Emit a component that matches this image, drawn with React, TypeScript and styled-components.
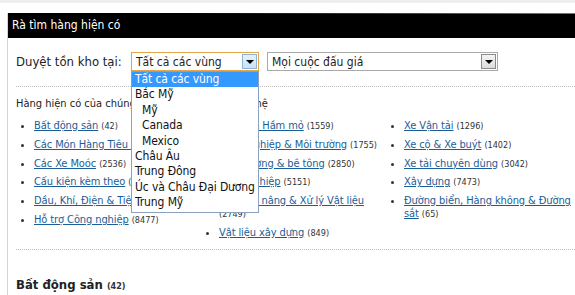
import React from 'react';
import styled, { createGlobalStyle } from 'styled-components';

const Global = createGlobalStyle`
  body {
    margin: 0;
    background: #fff;
    font-family: "DejaVu Sans Condensed", "Liberation Sans", sans-serif;
    color: #222;
  }
`;

const TopStrip = styled.div`
  height: 10px;
  border-top: 3px solid #eeeeee;
`;

const Panel = styled.div`
  margin-left: 7px;
  border-left: 1px solid #d4d4d4;
  min-height: 300px;
`;

const Header = styled.div`
  height: 24px;
  background: #000;
  border-top: 1px solid;
  border-image: linear-gradient(to right, #000 30%, #b06a20) 1;
  color: #fff;
  font-size: 12px;
  line-height: 23px;
  padding-left: 4px;
`;

const Body = styled.div`
  padding: 14px 0 0 8px;
`;

const FilterRow = styled.div`
  display: flex;
  align-items: center;
  height: 19px;
`;

const Label = styled.span`
  font-size: 13px;
  width: 115px;
`;

const SelectWrap = styled.div`
  position: relative;
  margin-right: 8px;
`;

const Select = styled.div<{ $w: number; $focus?: boolean }>`
  box-sizing: border-box;
  width: ${(p) => p.$w}px;
  height: 19px;
  border: 1px solid ${(p) => (p.$focus ? '#e3a64a' : '#a9a9a9')};
  display: flex;
  align-items: center;
  justify-content: space-between;
  padding-left: 4px;
  font-size: 12px;
  background: #fff;
`;

const Arrow = styled.div<{ $focus?: boolean }>`
  width: 15px;
  height: 15px;
  margin-right: 1px;
  box-sizing: border-box;
  border: 1px solid ${(p) => (p.$focus ? '#8fb3d6' : '#8a8a8a')};
  background: ${(p) =>
    p.$focus ? 'linear-gradient(#e6f2fc, #c9e1f6)' : 'linear-gradient(#f4f4f4, #dcdcdc)'};
  display: flex;
  align-items: center;
  justify-content: center;
`;

const Tri = styled.div`
  width: 0;
  height: 0;
  border-left: 4px solid transparent;
  border-right: 4px solid transparent;
  border-top: 4px solid #000;
  margin-top: 1px;
`;

const Dropdown = styled.ul`
  position: absolute;
  top: 19px;
  left: 0;
  width: 128px;
  box-sizing: border-box;
  margin: 0;
  padding: 0 0 1px;
  list-style: none;
  background: #fff;
  border: 1px solid #8aa2bd;
  z-index: 10;
`;

const Option = styled.li<{ $indent?: boolean; $active?: boolean }>`
  font-size: 12px;
  height: 15.4px;
  line-height: 15.4px;
  padding-left: ${(p) => (p.$indent ? '10px' : '3px')};
  background: ${(p) => (p.$active ? '#3399ff' : 'transparent')};
  color: ${(p) => (p.$active ? '#fff' : '#111')};
  letter-spacing: -0.1px;
`;

const Divider = styled.div<{ $gap: number }>`
  border-top: 1px dotted #bdbdbd;
  margin-top: ${(p) => p.$gap}px;
`;

const Intro = styled.div`
  font-size: 11px;
  margin: 10px 0 9px;
`;

const Grid = styled.div`
  display: grid;
  grid-template-columns: 185px 185px 1fr;
`;

const List = styled.ul`
  margin: 0;
  padding-left: 18px;
  list-style: disc;
  color: #333;
`;

const Item = styled.li`
  font-size: 11px;
  line-height: 13px;
  margin-bottom: 5.8px;
  padding-right: 2px;
  letter-spacing: -0.1px;
`;

const Link = styled.a`
  color: #1b5d98;
  text-decoration: underline;
`;

const Count = styled.span`
  font-size: 9px;
  line-height: 1;
  color: #333;
  letter-spacing: 0;
`;

const SectionTitle = styled.h3`
  font-size: 13px;
  font-weight: bold;
  margin: 27px 0 0;
`;

const regions = [
  { t: 'Tất cả các vùng', active: true },
  { t: 'Bắc Mỹ' },
  { t: 'Mỹ', indent: true },
  { t: 'Canada', indent: true },
  { t: 'Mexico', indent: true },
  { t: 'Châu Âu' },
  { t: 'Trung Đông' },
  { t: 'Úc và Châu Đại Dương' },
  { t: 'Trung Mỹ' },
];

const columns: [string, string][][] = [
  [
    ['Bất động sản', '42'],
    ['Các Món Hàng Tiêu Dùng', '1178'],
    ['Các Xe Moóc', '2536'],
    ['Cấu kiện kèm theo', '9870'],
    ['Dầu, Khí, Điện & Tiện ích', '1433'],
    ['Hỗ trợ Công nghiệp', '8477'],
  ],
  [
    ['Mỏ đá & Hầm mỏ', '1559'],
    ['Nông nghiệp & Môi trường', '1755'],
    ['Làm đường & bê tông', '2850'],
    ['Công nghiệp', '5151'],
    ['Cần cẩu nâng & Xử lý Vật liệu', '2749'],
    ['Vật liệu xây dựng', '849'],
  ],
  [
    ['Xe Vận tải', '1296'],
    ['Xe cộ & Xe buýt', '1402'],
    ['Xe tải chuyên dùng', '3042'],
    ['Xây dựng', '7473'],
    ['Đường biển, Hàng không & Đường sắt', '65'],
  ],
];

const App = () => (
  <>
    <Global />
    <TopStrip />
    <Panel>
      <Header>Rà tìm hàng hiện có</Header>
      <Body>
        <FilterRow>
          <Label>Duyệt tồn kho tại:</Label>
          <SelectWrap>
            <Select $w={128} $focus>
              Tất cả các vùng
              <Arrow $focus>
                <Tri />
              </Arrow>
            </Select>
            <Dropdown>
              {regions.map((r) => (
                <Option key={r.t} $indent={r.indent} $active={r.active}>
                  {r.t}
                </Option>
              ))}
            </Dropdown>
          </SelectWrap>
          <SelectWrap>
            <Select $w={231}>
              Mọi cuộc đấu giá
              <Arrow>
                <Tri />
              </Arrow>
            </Select>
          </SelectWrap>
        </FilterRow>
        <Divider $gap={15} />
        <Intro>Hàng hiện có của chúng tôi theo Ngành công nghệ</Intro>
        <Grid>
          {columns.map((col, i) => (
            <List key={i}>
              {col.map(([name, n]) => (
                <Item key={name}>
                  <Link href="#">{name}</Link> <Count>({n})</Count>
                </Item>
              ))}
            </List>
          ))}
        </Grid>
        <Divider $gap={4} />
        <SectionTitle>
          Bất động sản <Count>(42)</Count>
        </SectionTitle>
      </Body>
    </Panel>
  </>
);

export default App;
